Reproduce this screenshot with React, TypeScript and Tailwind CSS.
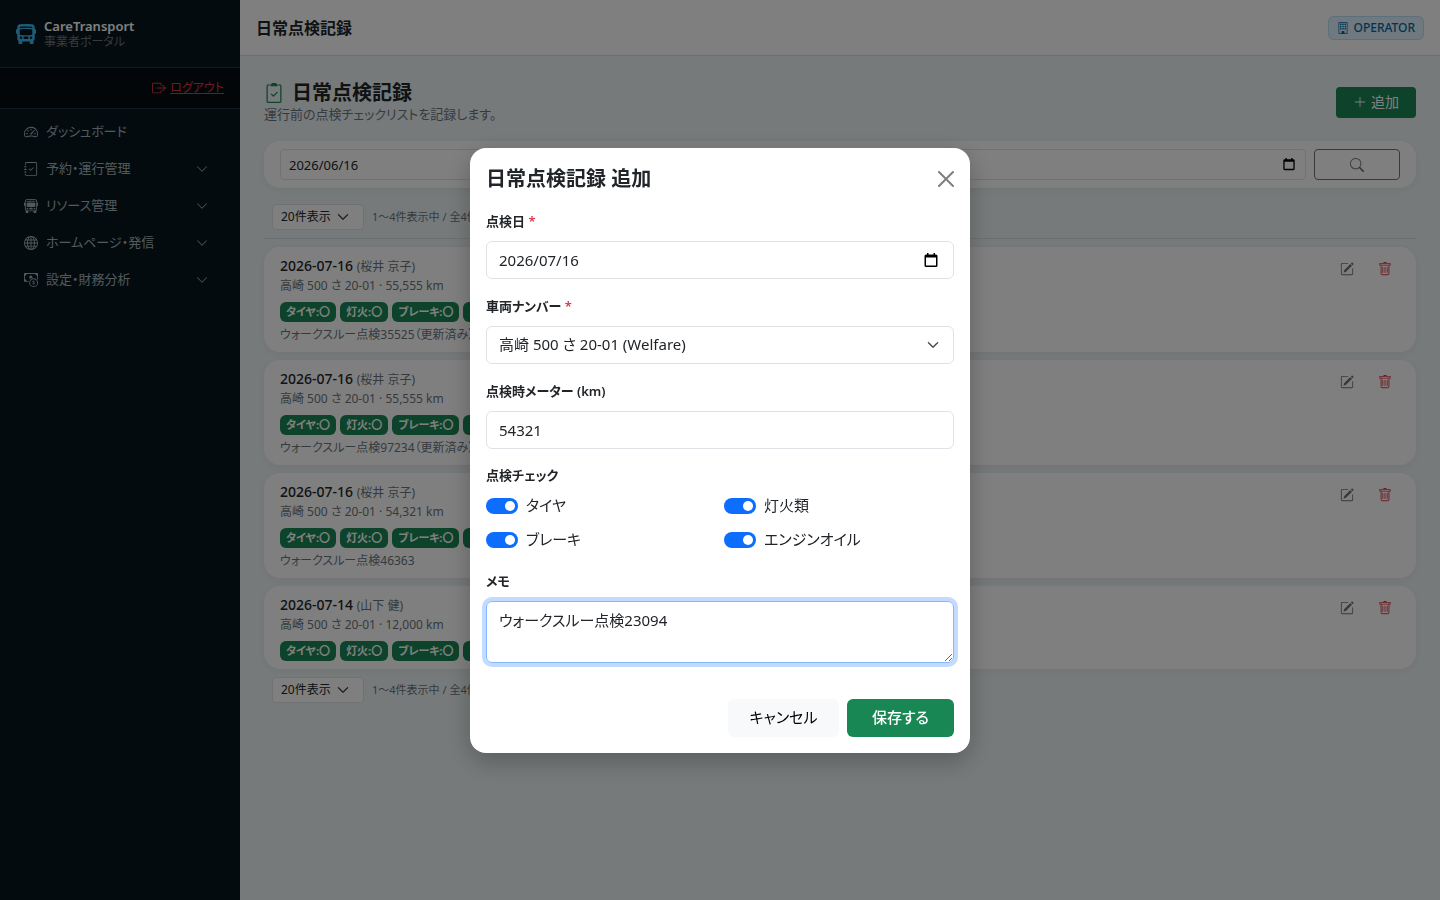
import { useState } from "react";
import {
  BsBoxArrowRight,
  BsBuilding,
  BsBusFront,
  BsBusFrontFill,
  BsCashCoin,
  BsChevronDown,
  BsClipboard2Check,
  BsGlobe,
  BsJournalCheck,
  BsPencilSquare,
  BsPlusLg,
  BsSearch,
  BsSpeedometer2,
  BsTrash,
} from "react-icons/bs";

interface Inspection {
  id: number;
  date: string;
  driver: string;
  meter: string;
  memo?: string;
}

const inspections: Inspection[] = [
  { id: 1, date: "2026-07-16", driver: "桜井 京子", meter: "55,555", memo: "ウォークスルー点検35525（更新済み）" },
  { id: 2, date: "2026-07-16", driver: "桜井 京子", meter: "55,555", memo: "ウォークスルー点検97234（更新済み）" },
  { id: 3, date: "2026-07-16", driver: "桜井 京子", meter: "54,321", memo: "ウォークスルー点検46363" },
  { id: 4, date: "2026-07-14", driver: "山下 健", meter: "12,000" },
];

const badges = ["タイヤ:〇", "灯火:〇", "ブレーキ:〇", "オイル:〇"];

const navLinks = [
  { label: "ダッシュボード", icon: <BsSpeedometer2 />, expandable: false },
  { label: "予約・運行管理", icon: <BsJournalCheck />, expandable: true },
  { label: "リソース管理", icon: <BsBusFront />, expandable: true },
  { label: "ホームページ・発信", icon: <BsGlobe />, expandable: true },
  { label: "設定・財務分析", icon: <BsCashCoin />, expandable: true },
];

const CalendarIcon = ({ className }: { className: string }) => (
  <svg viewBox="0 0 16 16" className={className} fill="currentColor" aria-hidden="true">
    <path d="M4 1h1.5v1.5h5V1H12v1.5h1A1.5 1.5 0 0 1 14.5 4v9.5A1.5 1.5 0 0 1 13 15H3a1.5 1.5 0 0 1-1.5-1.5V4A1.5 1.5 0 0 1 3 2.5h1zM3 5.5v8h10v-8z" />
  </svg>
);

const Sidebar = () => (
  <aside className="w-60 shrink-0 bg-[#08171d]">
    <div className="flex h-[68px] items-center gap-2 border-b border-[#1f3641] px-4">
      <BsBusFrontFill className="h-5 w-5 text-[#3eb5ef]" />
      <div>
        <div className="text-[13px] leading-4 font-semibold text-white">CareTransport</div>
        <div className="text-xs leading-4 text-[#6c757d]">事業者ポータル</div>
      </div>
    </div>
    <div className="flex h-[41px] items-center justify-end gap-1 border-b border-[#1f3641] bg-[#050d11] px-4 text-xs text-[#dc3545]">
      <BsBoxArrowRight className="h-3.5 w-3.5" />
      <a href="#logout" className="underline">ログアウト</a>
    </div>
    <nav className="px-2 py-1">
      {navLinks.map(({ label, icon, expandable }) => (
        <a
          key={label}
          href="#"
          className="flex h-[37px] items-center gap-2 px-4 text-[13px] text-[#a3b4bb] hover:text-white"
        >
          <span className="text-sm">{icon}</span>
          <span className="flex-1">{label}</span>
          {expandable && <BsChevronDown className="mr-2 h-3 w-3" />}
        </a>
      ))}
    </nav>
  </aside>
);

const Pager = ({ id }: { id: string }) => (
  <div className="flex items-center gap-2 px-2">
    <div className="relative">
      <select
        id={id}
        aria-label="表示件数"
        className="block h-[26px] w-[92px] appearance-none rounded border border-[#dee2e6] bg-white px-2 text-xs leading-6 text-[#212529]"
      >
        <option>20件表示</option>
      </select>
      <BsChevronDown className="pointer-events-none absolute top-[7px] right-[15px] h-3 w-3 stroke-1 text-[#343a40]" />
    </div>
    <label htmlFor={id} className="text-[11px] text-[#6c757d]">1～4件表示中 / 全4件</label>
  </div>
);

const InspectionCard = ({ item }: { item: Inspection }) => (
  <article className="flex items-start justify-between rounded-2xl bg-white px-4 py-2 shadow-[0_2px_8px_rgba(0,0,0,0.06)]">
    <div>
      <div className="text-sm leading-[21px]">
        <span className="font-medium text-[#212529]">{item.date}</span>{" "}
        <span className="text-xs text-[#6c757d]">({item.driver})</span>
      </div>
      <div className="text-xs leading-[19px] text-[#6c757d]">高崎 500 さ 20-01 · {item.meter} km</div>
      <div className="mt-[7px] flex gap-1">
        {badges.map((badge) => (
          <span key={badge} className="rounded-md bg-[#198754] px-1.5 text-[11px] leading-5 font-bold text-white">
            {badge}
          </span>
        ))}
      </div>
      {item.memo && <div className="mt-1 text-xs leading-[18px] text-[#6c757d]">{item.memo}</div>}
    </div>
    <div className="-mr-1 flex">
      <button aria-label="編集" className="px-3 py-[7px] text-[#6c757d]">
        <BsPencilSquare className="h-3.5 w-3.5" />
      </button>
      <button aria-label="削除" className="px-3 py-[7px] text-[#dc3545]">
        <BsTrash className="h-3.5 w-3.5" />
      </button>
    </div>
  </article>
);

const labelClass = "mb-2 block text-[13px] leading-[23px] font-semibold text-[#212529]";
const inputClass = "h-[38px] w-full rounded-md border border-[#dee2e6] bg-white px-3 text-[15px] text-[#212529]";

const Switch = ({ id, label }: { id: string; label: string }) => {
  const [checked, setChecked] = useState(true);
  return (
    <div className="flex h-6 items-center gap-2">
      <input
        id={id}
        type="checkbox"
        role="switch"
        checked={checked}
        onChange={() => setChecked(!checked)}
        className="flex h-4 w-8 appearance-none items-center justify-start rounded-full bg-[#adb5bd] px-[3px] before:h-2.5 before:w-2.5 before:rounded-full before:bg-white checked:justify-end checked:bg-[#0d6efd]"
      />
      <label htmlFor={id} className="text-[15px]">{label}</label>
    </div>
  );
};

const InspectionModal = ({ onClose }: { onClose: () => void }) => (
  <div className="fixed inset-0 z-50 flex items-center justify-center bg-black/50">
    <form
      role="dialog"
      aria-modal="true"
      aria-labelledby="modal-title"
      onSubmit={(e) => e.preventDefault()}
      className="w-full max-w-[500px] rounded-2xl bg-white p-4 text-[#212529] shadow-[0_8px_24px_rgba(0,0,0,0.25)]"
    >
      <div className="flex items-center justify-between">
        <h2 id="modal-title" className="text-xl leading-[30px] font-semibold">日常点検記録 追加</h2>
        <button type="button" aria-label="閉じる" onClick={onClose} className="text-[#7f7f7f]">
          <svg viewBox="0 0 16 16" className="h-4 w-4" fill="none" stroke="currentColor" strokeWidth="2" strokeLinecap="round">
            <path d="M1 1l14 14M15 1L1 15" />
          </svg>
        </button>
      </div>

      <div className="mt-4 space-y-4">
        <div>
          <label htmlFor="date" className={labelClass}>
            点検日 <span className="text-[#dc3545]">*</span>
          </label>
          <div className="relative">
            <input id="date" type="text" defaultValue="2026/07/16" className={inputClass} />
            <CalendarIcon className="pointer-events-none absolute top-[11px] right-[15px] h-4 w-4 text-black" />
          </div>
        </div>
        <div>
          <label htmlFor="vehicle" className={labelClass}>
            車両ナンバー <span className="text-[#dc3545]">*</span>
          </label>
          <div className="relative">
            <select id="vehicle" className={`${inputClass} appearance-none`}>
              <option>高崎 500 さ 20-01 (Welfare)</option>
            </select>
            <BsChevronDown className="pointer-events-none absolute top-[13px] right-[15px] h-3 w-3 stroke-1 text-[#343a40]" />
          </div>
        </div>
        <div>
          <label htmlFor="meter" className={labelClass}>点検時メーター (km)</label>
          <input id="meter" type="text" inputMode="numeric" defaultValue="54321" className={inputClass} />
        </div>
        <fieldset>
          <legend className="mb-2 text-[13px] leading-[21px] font-semibold">点検チェック</legend>
          <div className="grid grid-cols-2 gap-x-2 gap-y-2.5 pb-0.5">
            <Switch id="tire" label="タイヤ" />
            <Switch id="light" label="灯火類" />
            <Switch id="brake" label="ブレーキ" />
            <Switch id="oil" label="エンジンオイル" />
          </div>
        </fieldset>
        <div>
          <label htmlFor="memo" className={labelClass}>メモ</label>
          <textarea
            id="memo"
            defaultValue="ウォークスルー点検23094"
            className="block h-[62px] w-full rounded-md border border-[#86b7fe] px-3 py-1.5 text-[15px] leading-6 ring-4 ring-[#c2dbfe] outline-none"
          />
        </div>
      </div>

      <div className="mt-9 flex justify-end gap-2">
        <button type="button" onClick={onClose} className="h-[38px] w-[111px] rounded-md bg-[#f8f9fa] text-[15px] text-black">
          キャンセル
        </button>
        <button type="submit" className="h-[38px] w-[107px] rounded-md bg-[#198754] text-[15px] font-medium text-white">
          保存する
        </button>
      </div>
    </form>
  </div>
);

export default function App() {
  const [isModalOpen, setIsModalOpen] = useState(true);

  return (
    <div className="flex min-h-screen bg-[#eef5f7] font-['Noto_Sans','Noto_Sans_CJK_JP',sans-serif] text-[#212529] [font-feature-settings:'palt']">
      <Sidebar />
      <div className="min-w-0 flex-1">
        <header className="flex h-14 items-center justify-between border-b border-[#d5dfe3] bg-white px-4">
          <div className="font-semibold">日常点検記録</div>
          <span className="flex h-6 items-center gap-1 rounded-md border border-[#b6e0f7] bg-[#e0f2fe] px-2 text-xs font-medium text-[#0369a1]">
            <BsBuilding className="h-3 w-3" />
            OPERATOR
          </span>
        </header>

        <main className="px-6 pt-[25px] pb-6">
          <div className="flex items-center justify-between">
            <div>
              <h1 className="flex items-center gap-2 text-xl leading-6 font-semibold">
                <BsClipboard2Check className="h-5 w-5 text-[#198754]" />
                日常点検記録
              </h1>
              <p className="text-[13px] leading-[18px] text-[#6c757d]">運行前の点検チェックリストを記録します。</p>
            </div>
            <button
              onClick={() => setIsModalOpen(true)}
              className="flex h-[31px] w-20 items-center justify-center gap-1 rounded bg-[#198754] text-sm text-white"
            >
              <BsPlusLg className="h-3.5 w-3.5" />
              追加
            </button>
          </div>

          <form
            className="mt-[18px] flex gap-2 rounded-2xl bg-white px-4 py-2 shadow-[0_2px_8px_rgba(0,0,0,0.06)]"
            onSubmit={(e) => e.preventDefault()}
          >
            <div className="relative flex-1">
              <input
                type="text"
                aria-label="点検日で検索"
                defaultValue="2026/06/16"
                className="block h-[31px] w-full rounded border border-[#dee2e6] px-2 text-[13px]"
              />
              <CalendarIcon className="pointer-events-none absolute top-2 right-2.5 h-3.5 w-3.5 text-black" />
            </div>
            <button aria-label="検索" className="flex h-[31px] w-[86px] items-center justify-center rounded border border-[#6c757d] text-[#6c757d]">
              <BsSearch className="h-3.5 w-3.5" />
            </button>
          </form>

          <div className="mt-4 border-b border-[#d5dfe3] pb-2">
            <Pager id="pager-top" />
          </div>
          <div className="my-2 space-y-2">
            {inspections.map((item) => (
              <InspectionCard key={item.id} item={item} />
            ))}
          </div>
          <Pager id="pager-bottom" />
        </main>
      </div>

      {isModalOpen && <InspectionModal onClose={() => setIsModalOpen(false)} />}
    </div>
  );
}
